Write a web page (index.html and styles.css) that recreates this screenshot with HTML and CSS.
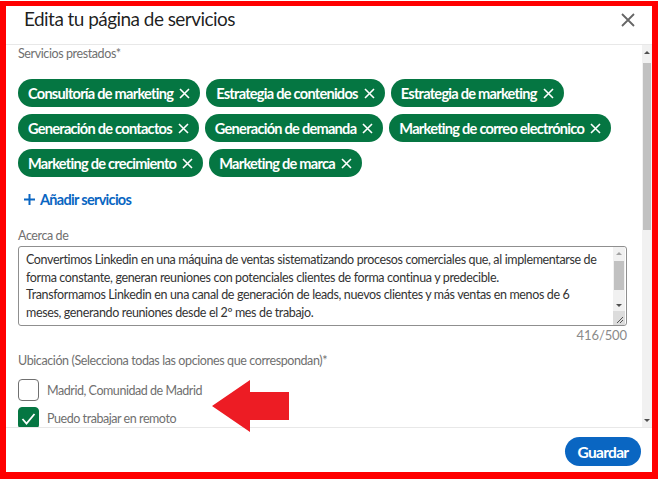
FILE: index.html
```html
<!DOCTYPE html>
<html lang="es">
<head>
<meta charset="utf-8">
<title>Edita tu página de servicios</title>
<link rel="stylesheet" href="styles.css">
</head>
<body>
<div class="frame">
  <div class="modal">
    <header class="modal-header">
      <h2 class="title">Edita tu página de servicios</h2>
      <button class="close" aria-label="Cerrar">
        <svg viewBox="0 0 14 14" width="14" height="14"><path d="M1 1L13 13M13 1L1 13" stroke="#666" stroke-width="1.8" fill="none"/></svg>
      </button>
    </header>
    <div class="modal-body">
      <div class="content">
        <div class="label">Servicios prestados*</div>
        <ul class="pills">
          <li class="pill">Consultoría de marketing<svg viewBox="0 0 11 11"><path d="M1 1L10 10M10 1L1 10"/></svg></li>
          <li class="pill">Estrategia de contenidos<svg viewBox="0 0 11 11"><path d="M1 1L10 10M10 1L1 10"/></svg></li>
          <li class="pill">Estrategia de marketing<svg viewBox="0 0 11 11"><path d="M1 1L10 10M10 1L1 10"/></svg></li>
          <li class="pill">Generación de contactos<svg viewBox="0 0 11 11"><path d="M1 1L10 10M10 1L1 10"/></svg></li>
          <li class="pill">Generación de demanda<svg viewBox="0 0 11 11"><path d="M1 1L10 10M10 1L1 10"/></svg></li>
          <li class="pill">Marketing de correo electrónico<svg viewBox="0 0 11 11"><path d="M1 1L10 10M10 1L1 10"/></svg></li>
          <li class="pill">Marketing de crecimiento<svg viewBox="0 0 11 11"><path d="M1 1L10 10M10 1L1 10"/></svg></li>
          <li class="pill">Marketing de marca<svg viewBox="0 0 11 11"><path d="M1 1L10 10M10 1L1 10"/></svg></li>
        </ul>
        <button class="add">
          <svg viewBox="0 0 11 11" width="11" height="11"><path d="M5.5 0V11M0 5.5H11" stroke="#0a66c2" stroke-width="2" fill="none"/></svg>
          <span>Añadir servicios</span>
        </button>
        <div class="label label-about">Acerca de</div>
        <div class="textarea">
          <div class="ta-text">Convertimos Linkedin en una máquina de ventas sistematizando procesos comerciales que, al implementarse de<br>forma constante, generan reuniones con potenciales clientes de forma continua y predecible.<br>Transformamos Linkedin en una canal de generación de leads, nuevos clientes y más ventas en menos de 6<br>meses, generando reuniones desde el 2º mes de trabajo.<br>Somos especialistas en prospección y venta social para empresas de servicios.</div>
          <div class="ta-scroll">
            <span class="sb-btn"><i class="tri up"></i></span>
            <div class="ta-track"><div class="ta-thumb"></div></div>
            <span class="sb-btn"><i class="tri down"></i></span>
            <span class="resize">
              <svg viewBox="0 0 12 14" width="12" height="14"><path d="M4 12L10 6M7 12L10 9" stroke="#555" stroke-width="1" fill="none"/></svg>
            </span>
          </div>
        </div>
        <div class="counter">416/500</div>
        <div class="label label-loc">Ubicación (Selecciona todas las opciones que correspondan)*</div>
        <label class="check"><span class="box"></span><span>Madrid, Comunidad de Madrid</span></label>
        <label class="check check-2"><span class="box checked"><svg viewBox="0 0 21 22" width="21" height="22"><path d="M4.5 12L8.5 16.5L16.5 7" stroke="#fff" stroke-width="1.8" fill="none"/></svg></span><span>Puedo trabajar en remoto</span></label>
      </div>
      <div class="scrollbar">
        <span class="sb-btn top"><i class="tri up"></i></span>
        <div class="track"><div class="thumb"></div></div>
        <span class="sb-btn bottom"><i class="tri down"></i></span>
      </div>
    </div>
    <footer class="modal-footer">
      <button class="save">Guardar</button>
    </footer>
  </div>
  <svg class="red-arrow" viewBox="210 378 82 56" width="82" height="56"><polygon points="212,406 250,380 250,392 289,392 289,420 250,420 250,432" fill="#ed1c24"/></svg>
</div>
</body>
</html>
```

FILE: styles.css
```css
html, body {
  margin: 0;
  padding: 0;
  background: #fff;
}

body {
  font-family: Lato, "Liberation Sans", sans-serif;
  color: rgba(0, 0, 0, 0.9);
}

.frame {
  position: relative;
  margin-top: 1px;
  width: 658px;
  height: 478px;
  box-sizing: border-box;
  border-style: solid;
  border-color: #ff0000;
  border-width: 5px 6px 7px 6px;
  background: #fff;
}

.modal {
  height: 100%;
  display: flex;
  flex-direction: column;
}

.modal-header {
  flex: none;
  height: 39px;
  box-sizing: border-box;
  border-bottom: 1px solid #e8e8e8;
  display: flex;
  justify-content: space-between;
  align-items: flex-start;
  padding: 1px 17px 0 18px;
}

.title {
  margin: 0;
  font-size: 19px;
  font-weight: 400;
  line-height: 24px;
  letter-spacing: -0.55px;
  color: rgba(0, 0, 0, 0.88);
}

.close {
  margin-top: 6px;
  padding: 0;
  border: 0;
  background: none;
  width: 14px;
  height: 14px;
  display: block;
}

.close svg {
  display: block;
}

.modal-body {
  flex: 1;
  min-height: 0;
  display: flex;
}

.content {
  flex: 1;
  min-width: 0;
  overflow: hidden;
  padding: 0 15px 0 12px;
}

.label {
  font-size: 12.5px;
  line-height: 18px;
  color: #707070;
  letter-spacing: -0.4px;
}

.pills {
  list-style: none;
  margin: 16px 0 0;
  padding: 0;
  display: flex;
  flex-wrap: wrap;
  gap: 7px 6px;
}

.pill {
  display: flex;
  align-items: center;
  gap: 6px;
  height: 28px;
  box-sizing: border-box;
  padding: 0 10px;
  border-radius: 14px;
  background: #057642;
  color: #fff;
  font-size: 14.6px;
  font-weight: 700;
  letter-spacing: -0.75px;
  white-space: nowrap;
}

.pill svg {
  width: 11px;
  height: 11px;
  flex: none;
  stroke: #fff;
  stroke-width: 1.6;
  fill: none;
}

.add {
  margin: 11px 0 0;
  height: 22px;
  padding: 0 0 0 6px;
  border: 0;
  background: none;
  display: flex;
  align-items: center;
  gap: 5px;
  font-family: inherit;
  font-size: 14.5px;
  font-weight: 700;
  letter-spacing: -0.7px;
  color: #0a66c2;
}

.add svg {
  display: block;
}

.label-about {
  margin-top: 17px;
}

.textarea {
  margin-top: 1px;
  height: 80px;
  box-sizing: border-box;
  border: 1px solid #8f8f8f;
  border-radius: 3px;
  display: flex;
  overflow: hidden;
}

.ta-text {
  flex: 1;
  min-width: 0;
  padding: 4px 0 0 7px;
  font-size: 12.5px;
  line-height: 17.7px;
  color: #333;
  white-space: nowrap;
  overflow: hidden;
  letter-spacing: -0.36px;
}

.ta-scroll {
  flex: none;
  width: 12px;
  margin-right: 1px;
  background: #f1f1f1;
  display: flex;
  flex-direction: column;
}

.sb-btn {
  flex: none;
  height: 12px;
  display: flex;
  align-items: center;
  justify-content: center;
}

.tri {
  display: block;
  width: 0;
  height: 0;
  border-left: 3px solid transparent;
  border-right: 3px solid transparent;
}

.tri.up {
  border-bottom: 3px solid #a3a3a3;
}

.tri.down {
  border-top: 3px solid #505050;
}

.ta-track {
  flex: none;
  height: 40px;
  padding: 2px 1px 0;
  box-sizing: border-box;
}

.ta-thumb {
  height: 29px;
  background: #c1c1c1;
}

.resize {
  flex: 1;
  background: #dcdcdc;
  display: flex;
  align-items: flex-end;
  justify-content: flex-end;
}

.resize svg {
  display: block;
}

.counter {
  margin-top: 1px;
  text-align: right;
  font-size: 13px;
  line-height: 16px;
  color: #8a8a8a;
  letter-spacing: -0.1px;
}

.label-loc {
  margin-top: 9px;
}

.check {
  display: flex;
  align-items: center;
  gap: 8px;
  margin-top: 9px;
  height: 22px;
  font-size: 12.5px;
  color: #707070;
  letter-spacing: -0.45px;
}

.check-2 {
  margin-top: 6px;
}

.box {
  flex: none;
  width: 21px;
  height: 22px;
  box-sizing: border-box;
  border: 1px solid #707070;
  border-radius: 4px;
}

.box.checked {
  background: #057642;
  border-color: #057642;
  position: relative;
}

.box.checked svg {
  position: absolute;
  left: -1px;
  top: -1px;
}

.scrollbar {
  flex: none;
  width: 10px;
  background: #f1f1f1;
  display: flex;
  flex-direction: column;
}

.scrollbar .sb-btn {
  height: 14px;
}

.scrollbar .tri.up {
  border-bottom-color: #505050;
}

.track {
  flex: 1;
  padding: 4px 1px 0;
}

.thumb {
  height: 167px;
  background: #c1c1c1;
}

.modal-footer {
  flex: none;
  height: 45px;
  box-sizing: border-box;
  border-top: 1px solid #e8e8e8;
  display: flex;
  justify-content: flex-end;
  align-items: flex-start;
  padding: 9px 11px 0 0;
}

.save {
  width: 76px;
  height: 29px;
  border: 0;
  border-radius: 15px;
  background: #0a66c2;
  color: #fff;
  font-family: inherit;
  font-size: 15.5px;
  font-weight: 700;
  letter-spacing: -0.7px;
  padding: 0;
}

.red-arrow {
  position: absolute;
  left: 204px;
  top: 372px;
}
```
